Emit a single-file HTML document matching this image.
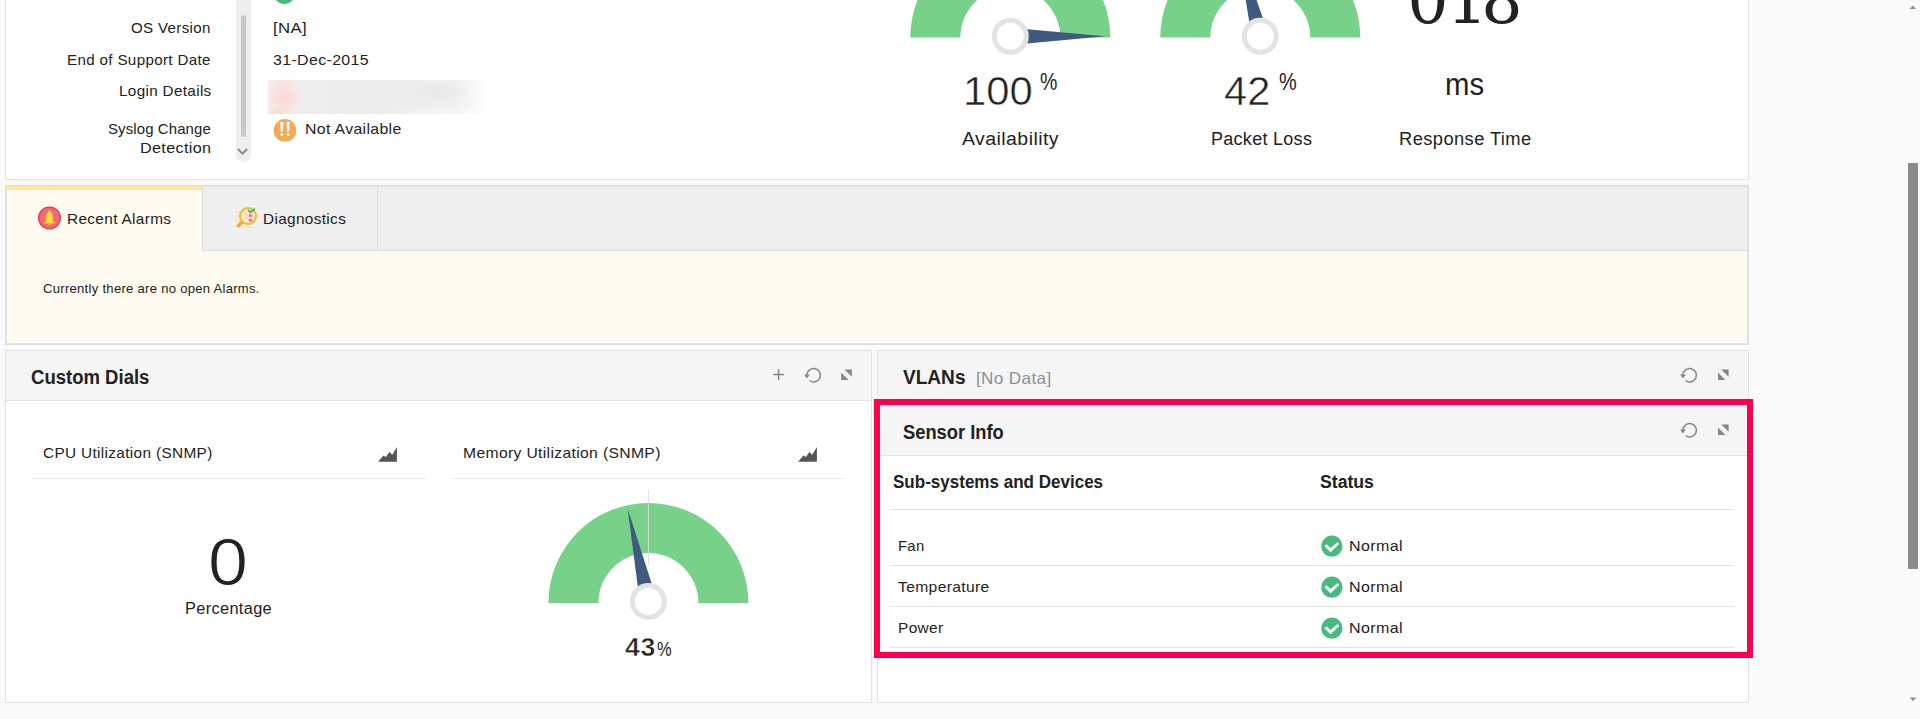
<!DOCTYPE html>
<html lang="en"><head><meta charset="utf-8"><title>Device Snapshot</title>
<style>
html,body{margin:0;padding:0}
body{width:1920px;height:719px;overflow:hidden;background:#fafafa;position:relative;font-family:'Liberation Sans',sans-serif}
.b{position:absolute;box-sizing:border-box}
.t{position:absolute;white-space:nowrap}
svg{position:absolute;left:0;top:0}
</style></head>
<body>

<!-- top panel -->
<div class="b" style="left:5px;top:-10px;width:1744px;height:190px;background:#fff;border:1px solid #e4e4e4"></div>
<!-- left details scroll track -->
<div class="b" style="left:236px;top:-20px;width:15px;height:182px;background:#eeeeee;border-radius:7.5px"></div>
<div class="b" style="left:241px;top:15px;width:5px;height:122px;background:#c8c8c8;border-radius:2.5px"></div>
<!-- blurred login -->
<div class="b" style="left:268px;top:80px;width:217px;height:34px;background:radial-gradient(ellipse 17px 22px at 16px 17px,#fdd5d5 0,rgba(253,213,213,0) 100%),radial-gradient(ellipse 16px 7px at 10px 34px,#fddcc6 0,rgba(253,220,198,0) 100%),radial-gradient(ellipse 70px 11px at 185px 34px,rgba(255,255,255,.5) 0,rgba(255,255,255,0) 100%),radial-gradient(ellipse 34px 9px at 170px 12px,#e8e8e8 0,rgba(232,232,232,0) 100%),linear-gradient(90deg,#f7ebeb 0px,#f1eded 30px,#eeeeee 50px,#ececec 75px,#ededed 150px,#eeeeee 185px,#f5f5f5 200px,#fefefe 217px)"></div>
<!-- tabs -->
<div class="b" style="left:5px;top:185px;width:1744px;height:160px;background:#fffbf0;border:1px solid #dedee2"></div>
<div class="b" style="left:6px;top:186px;width:1742px;height:158px;border:1px solid #e3e3e3"></div>
<div class="b" style="left:6px;top:186px;width:1742px;height:65px;background:#efefef;border:1px solid #e3e3e3;border-left:0;border-bottom:1px solid #dddde1"></div>
<div class="b" style="left:6px;top:186px;width:196px;height:65px;background:#fffbf0;border-top:4px solid #fee79b"></div>
<div class="b" style="left:6px;top:190px;width:1px;height:154px;background:#e0e0e0"></div>
<div class="b" style="left:202px;top:186px;width:1px;height:65px;background:#dddde1"></div>
<div class="b" style="left:377px;top:187px;width:1px;height:63px;background:#dddde1"></div>
<!-- custom dials panel -->
<div class="b" style="left:5px;top:350px;width:867px;height:353px;background:#fff;border:1px solid #e2e2e2"></div>
<div class="b" style="left:6px;top:351px;width:865px;height:50px;background:#f5f5f5;border-bottom:1px solid #e2e2e2"></div>
<div class="b" style="left:31px;top:478px;width:395px;height:1px;background:#ececec"></div>
<div class="b" style="left:451px;top:478px;width:394px;height:1px;background:#ececec"></div>
<!-- vlan panel -->
<div class="b" style="left:877px;top:350px;width:872px;height:353px;background:#fff;border:1px solid #e2e2e2"></div>
<div class="b" style="left:878px;top:351px;width:870px;height:50px;background:#f5f5f5;border-bottom:1px solid #e2e2e2"></div>
<div class="b" style="left:878px;top:405px;width:870px;height:51px;background:#f5f5f5;border-bottom:1px solid #e2e2e2"></div>
<div class="b" style="left:890px;top:509px;width:844px;height:1px;background:#e4e4e4"></div>
<div class="b" style="left:890px;top:565px;width:844px;height:1px;background:#e4e4e4"></div>
<div class="b" style="left:890px;top:606px;width:844px;height:1px;background:#e4e4e4"></div>
<div class="b" style="left:890px;top:647px;width:844px;height:1px;background:#e4e4e4"></div>
<!-- red highlight -->
<div class="b" style="left:874px;top:399px;width:879px;height:259px;border:6px solid #fc004d"></div>
<!-- page scrollbar -->
<div class="b" style="left:1908px;top:163px;width:10px;height:406px;background:#8b8b8b"></div>

<svg width="1920" height="719" viewBox="0 0 1920 719">
<path d="M910.3 37.5 A100 100 0 0 1 1110.3 37.5 L1060.3 37.5 A50 50 0 0 0 960.3 37.5 Z" fill="#77d188"/><path d="M1010.30 44.90 L1105.30 36.30 L1010.30 27.70 Z" fill="#3e5a80"/><circle cx="1010.3" cy="36.3" r="16" fill="#fff" stroke="#e3e3e3" stroke-width="5"/>
<path d="M1160.3 37.5 A100 100 0 0 1 1360.3 37.5 L1310.3 37.5 A50 50 0 0 0 1210.3 37.5 Z" fill="#77d188"/><path d="M1268.63 34.16 L1236.67 -55.72 L1251.97 38.44 Z" fill="#3e5a80"/><circle cx="1260.3" cy="36.3" r="16" fill="#fff" stroke="#e3e3e3" stroke-width="5"/>
<path d="M548.4 603 A100 100 0 0 1 748.4 603 L698.4 603 A50 50 0 0 0 598.4 603 Z" fill="#77d188"/><rect x="647.9" y="490" width="1" height="75" fill="#dcdcdc"/><path d="M656.79 599.62 L627.68 508.79 L640.01 603.38 Z" fill="#3e5a80"/><circle cx="648.4" cy="601.5" r="16" fill="#fff" stroke="#e3e3e3" stroke-width="5"/>
<path d="M773.2 374.6 H784.0 M778.6 369.20000000000005 V380.0" stroke="#83868a" stroke-width="1.5" fill="none"/>
<path d="M806.95 374.96 A6.75 6.75 0 1 1 809.54 380.52" fill="none" stroke="#83868a" stroke-width="1.5"/><path d="M804.05 374.60 L809.85 374.60 L806.95 378.40 Z" fill="#83868a"/>
<path d="M844.4000000000001 369.4 L851.8000000000001 369.4 L851.8000000000001 376.8 Z" fill="#83868a"/><path d="M841.2 372.59999999999997 L841.2 380.0 L848.6 380.0 Z" fill="#83868a"/>
<path d="M1682.95 374.96 A6.75 6.75 0 1 1 1685.54 380.52" fill="none" stroke="#83868a" stroke-width="1.5"/><path d="M1680.05 374.60 L1685.85 374.60 L1682.95 378.40 Z" fill="#83868a"/>
<path d="M1721.2 369.4 L1728.6 369.4 L1728.6 376.8 Z" fill="#83868a"/><path d="M1718.0 372.59999999999997 L1718.0 380.0 L1725.3999999999999 380.0 Z" fill="#83868a"/>
<path d="M1682.95 429.96 A6.75 6.75 0 1 1 1685.54 435.52" fill="none" stroke="#83868a" stroke-width="1.5"/><path d="M1680.05 429.60 L1685.85 429.60 L1682.95 433.40 Z" fill="#83868a"/>
<path d="M1721.2 424.4 L1728.6 424.4 L1728.6 431.8 Z" fill="#83868a"/><path d="M1718.0 427.59999999999997 L1718.0 435.0 L1725.3999999999999 435.0 Z" fill="#83868a"/>
<path d="M378.20 461.70 L383.35 455.60 L385.85 457.10 L389.40 452.10 L392.30 454.80 L396.90 447.10 L396.90 461.70 Z" fill="#555"/>
<path d="M798.20 461.70 L803.35 455.60 L805.85 457.10 L809.40 452.10 L812.30 454.80 L816.90 447.10 L816.90 461.70 Z" fill="#555"/>
<circle cx="1331.9" cy="546.2" r="10.6" fill="#47bb7e"/><path d="M1324.40 546.30 L1326.50 544.20 L1330.60 547.90 L1337.50 542.10 L1339.20 544.00 L1330.60 552.30 Z" fill="#fff"/>
<circle cx="1331.9" cy="587.2" r="10.6" fill="#47bb7e"/><path d="M1324.40 587.30 L1326.50 585.20 L1330.60 588.90 L1337.50 583.10 L1339.20 585.00 L1330.60 593.30 Z" fill="#fff"/>
<circle cx="1331.9" cy="628.2" r="10.6" fill="#47bb7e"/><path d="M1324.40 628.30 L1326.50 626.20 L1330.60 629.90 L1337.50 624.10 L1339.20 626.00 L1330.60 634.30 Z" fill="#fff"/>
<circle cx="284.4" cy="-6.4" r="10.6" fill="#47bb7e"/>
<circle cx="285" cy="130.4" r="11.3" fill="#f7a853"/><path d="M280.2 122.1 h3.2 l-0.5 9.4 h-2.2 Z M286.5 122.1 h3.2 l-0.5 9.4 h-2.2 Z" fill="#fff"/><rect x="280.5" y="133.3" width="2.6" height="2.6" fill="#fff"/><rect x="286.8" y="133.3" width="2.6" height="2.6" fill="#fff"/>
<path d="M237.9 149.0 L242.5 153.7 L247.1 149.0" stroke="#8a8a8a" stroke-width="1.8" fill="none"/>
<defs><linearGradient id="bellg" x1="0" x2="1" y1="0" y2="0"><stop offset="0" stop-color="#f6a01c"/><stop offset="0.5" stop-color="#ffe34d"/><stop offset="1" stop-color="#f6a01c"/></linearGradient></defs>
<circle cx="49.5" cy="217.9" r="10.9" fill="#ea6b79" stroke="#fb2740" stroke-width="1.1"/><circle cx="49.5" cy="211.4" r="1.1" fill="#f9c22e"/><path d="M45.7 220.6 C45.7 216 46.0 212.1 49.5 212.1 C53.0 212.1 53.3 216 53.3 220.6 L55.9 223.4 L43.1 223.4 Z" fill="url(#bellg)"/><circle cx="49.5" cy="224.1" r="1.3" fill="#f8b322"/>
<g opacity="0.55"><rect x="236" y="211.5" width="4.5" height="1.6" fill="#f9d3a6"/><rect x="235.5" y="215.5" width="4" height="1.6" fill="#f9d3a6"/><rect x="236" y="219.5" width="4" height="1.6" fill="#f9d3a6"/><rect x="243" y="226" width="9" height="1.6" fill="#f9d3a6"/></g><path d="M242.0 222.2 L238.2 225.9" stroke="#f7a11c" stroke-width="3.2" stroke-linecap="round"/><circle cx="248.1" cy="216.1" r="8" fill="#fce6cc" stroke="#e6c034" stroke-width="2"/><path d="M244.5 214.5 h3 M244.5 218 h3" stroke="#f7d0b0" stroke-width="1.3"/><rect x="248.8" y="214.3" width="3.4" height="2.6" fill="#f4707c"/><rect x="248.8" y="218.8" width="3.4" height="2.8" fill="#f4707c"/><path d="M248.6 210.6 l2 1.8 l3.6 -3.2" stroke="#3dbb7d" stroke-width="2" fill="none" stroke-linecap="round"/>
<path d="M1909.6 9 L1916 9 L1912.8 5.4 Z" fill="#8a8a8a"/>
<path d="M1909.6 697.4 L1916.2 697.4 L1912.9 701 Z" fill="#8a8a8a"/>
</svg>
<div class="t" id="t0" style="left:131.13px;top:19.01px;font-size:15px;line-height:18px;font-weight:400;color:#222;font-family:'Liberation Sans', sans-serif;letter-spacing:0.330px;transform:scaleX(1.0061);transform-origin:0 0;">OS Version</div>
<div class="t" id="t1" style="left:67.37px;top:51.01px;font-size:15px;line-height:18px;font-weight:400;color:#222;font-family:'Liberation Sans', sans-serif;letter-spacing:0.330px;transform:scaleX(1.0113);transform-origin:0 0;">End of Support Date</div>
<div class="t" id="t2" style="left:119.10px;top:82.01px;font-size:15px;line-height:18px;font-weight:400;color:#222;font-family:'Liberation Sans', sans-serif;letter-spacing:0.330px;transform:scaleX(1.0172);transform-origin:0 0;">Login Details</div>
<div class="t" id="t3" style="left:108.05px;top:120.00px;font-size:15px;line-height:18px;font-weight:400;color:#222;font-family:'Liberation Sans', sans-serif;letter-spacing:0.114px;transform:scaleX(0.9967);transform-origin:0 0;">Syslog Change</div>
<div class="t" id="t4" style="left:140.13px;top:139.02px;font-size:15px;line-height:18px;font-weight:400;color:#222;font-family:'Liberation Sans', sans-serif;letter-spacing:0.330px;transform:scaleX(1.0759);transform-origin:0 0;">Detection</div>
<div class="t" id="t5" style="left:273.06px;top:19.01px;font-size:15px;line-height:18px;font-weight:400;color:#222;font-family:'Liberation Sans', sans-serif;letter-spacing:0.330px;transform:scaleX(1.1193);transform-origin:0 0;">[NA]</div>
<div class="t" id="t6" style="left:273.31px;top:51.01px;font-size:15px;line-height:18px;font-weight:400;color:#222;font-family:'Liberation Sans', sans-serif;letter-spacing:0.330px;transform:scaleX(1.0627);transform-origin:0 0;">31-Dec-2015</div>
<div class="t" id="t7" style="left:305.25px;top:120.00px;font-size:15px;line-height:18px;font-weight:400;color:#222;font-family:'Liberation Sans', sans-serif;letter-spacing:0.330px;transform:scaleX(1.0542);transform-origin:0 0;">Not Available</div>
<div class="t" id="t8" style="left:963.30px;top:66.01px;font-size:41.5px;line-height:50px;font-weight:400;color:#222;font-family:'Liberation Sans', sans-serif;letter-spacing:0.000px;transform:scaleX(1.0066);transform-origin:0 0;-webkit-text-stroke:0.5px #fff;">100</div>
<div class="t" id="t9" style="left:1040.36px;top:68.01px;font-size:23px;line-height:28px;font-weight:400;color:#222;font-family:'Liberation Sans', sans-serif;letter-spacing:0.000px;transform:scaleX(0.8480);transform-origin:0 0;">%</div>
<div class="t" id="t10" style="left:1224.48px;top:66.01px;font-size:41.5px;line-height:50px;font-weight:400;color:#222;font-family:'Liberation Sans', sans-serif;letter-spacing:0.000px;transform:scaleX(1.0021);transform-origin:0 0;-webkit-text-stroke:0.5px #fff;">42</div>
<div class="t" id="t11" style="left:1278.51px;top:68.01px;font-size:23px;line-height:28px;font-weight:400;color:#222;font-family:'Liberation Sans', sans-serif;letter-spacing:0.000px;transform:scaleX(0.8665);transform-origin:0 0;">%</div>
<div class="t" id="t12" style="left:1407.21px;top:-38.01px;font-size:65px;line-height:78px;font-weight:400;color:#222;font-family:'DejaVu Serif', serif;letter-spacing:-4.384px;">0<span style='position:relative;left:2.2px'>1</span>8</div>
<div class="t" id="t13" style="left:1444.69px;top:65.00px;font-size:32px;line-height:38px;font-weight:400;color:#222;font-family:'Liberation Sans', sans-serif;letter-spacing:0.000px;transform:scaleX(0.9158);transform-origin:0 0;">ms</div>
<div class="t" id="t14" style="left:961.85px;top:128.00px;font-size:18px;line-height:22px;font-weight:400;color:#222;font-family:'Liberation Sans', sans-serif;letter-spacing:0.396px;transform:scaleX(1.0840);transform-origin:0 0;">Availability</div>
<div class="t" id="t15" style="left:1210.65px;top:128.00px;font-size:18px;line-height:22px;font-weight:400;color:#222;font-family:'Liberation Sans', sans-serif;letter-spacing:0.295px;transform:scaleX(0.9989);transform-origin:0 0;">Packet Loss</div>
<div class="t" id="t16" style="left:1399.31px;top:128.00px;font-size:18px;line-height:22px;font-weight:400;color:#222;font-family:'Liberation Sans', sans-serif;letter-spacing:0.396px;transform:scaleX(1.0182);transform-origin:0 0;">Response Time</div>
<div class="t" id="t17" style="left:66.60px;top:210.01px;font-size:15px;line-height:18px;font-weight:400;color:#222;font-family:'Liberation Sans', sans-serif;letter-spacing:0.330px;transform:scaleX(1.0248);transform-origin:0 0;">Recent Alarms</div>
<div class="t" id="t18" style="left:262.80px;top:210.01px;font-size:15px;line-height:18px;font-weight:400;color:#222;font-family:'Liberation Sans', sans-serif;letter-spacing:0.330px;transform:scaleX(1.0247);transform-origin:0 0;">Diagnostics</div>
<div class="t" id="t19" style="left:42.59px;top:281.00px;font-size:13px;line-height:16px;font-weight:400;color:#222;font-family:'Liberation Sans', sans-serif;letter-spacing:0.286px;transform:scaleX(1.0036);transform-origin:0 0;">Currently there are no open Alarms.</div>
<div class="t" id="t20" style="left:30.66px;top:365.01px;font-size:20px;line-height:24px;font-weight:700;color:#222;font-family:'Liberation Sans', sans-serif;letter-spacing:0.000px;transform:scaleX(0.9264);transform-origin:0 0;">Custom Dials</div>
<div class="t" id="t21" style="left:43.35px;top:444.00px;font-size:15px;line-height:18px;font-weight:400;color:#222;font-family:'Liberation Sans', sans-serif;letter-spacing:0.330px;transform:scaleX(1.0242);transform-origin:0 0;">CPU Utilization (SNMP)</div>
<div class="t" id="t22" style="left:462.78px;top:444.00px;font-size:15px;line-height:18px;font-weight:400;color:#222;font-family:'Liberation Sans', sans-serif;letter-spacing:0.330px;transform:scaleX(1.0455);transform-origin:0 0;">Memory Utilization (SNMP)</div>
<div class="t" id="t23" style="left:208.27px;top:523.00px;font-size:66px;line-height:79px;font-weight:400;color:#222;font-family:'Liberation Sans', sans-serif;letter-spacing:0.000px;transform:scaleX(1.0892);transform-origin:0 0;-webkit-text-stroke:0.9px #fff;">0</div>
<div class="t" id="t24" style="left:185.10px;top:599.01px;font-size:16px;line-height:19px;font-weight:400;color:#222;font-family:'Liberation Sans', sans-serif;letter-spacing:0.352px;transform:scaleX(1.0191);transform-origin:0 0;">Percentage</div>
<div class="t" id="t25" style="left:624.64px;top:632.01px;font-size:25px;line-height:30px;font-weight:700;color:#222;font-family:'Liberation Sans', sans-serif;letter-spacing:0.550px;transform:scaleX(1.0683);transform-origin:0 0;-webkit-text-stroke:0.5px #fff;">43</div>
<div class="t" id="t26" style="left:656.80px;top:638.01px;font-size:19.5px;line-height:23px;font-weight:400;color:#222;font-family:'Liberation Sans', sans-serif;letter-spacing:0.000px;transform:scaleX(0.8447);transform-origin:0 0;">%</div>
<div class="t" id="t27" style="left:902.89px;top:365.01px;font-size:20px;line-height:24px;font-weight:700;color:#222;font-family:'Liberation Sans', sans-serif;letter-spacing:0.000px;transform:scaleX(0.9530);transform-origin:0 0;">VLANs</div>
<div class="t" id="t28" style="left:975.62px;top:368.00px;font-size:16.5px;line-height:20px;font-weight:400;color:#8a8f9b;font-family:'Liberation Sans', sans-serif;letter-spacing:0.363px;transform:scaleX(1.0351);transform-origin:0 0;">[No Data]</div>
<div class="t" id="t29" style="left:902.61px;top:420.00px;font-size:20px;line-height:24px;font-weight:700;color:#222;font-family:'Liberation Sans', sans-serif;letter-spacing:0.000px;transform:scaleX(0.9151);transform-origin:0 0;">Sensor Info</div>
<div class="t" id="t30" style="left:892.76px;top:471.01px;font-size:18px;line-height:22px;font-weight:700;color:#222;font-family:'Liberation Sans', sans-serif;letter-spacing:0.000px;transform:scaleX(0.9458);transform-origin:0 0;">Sub-systems and Devices</div>
<div class="t" id="t31" style="left:1320.09px;top:471.01px;font-size:18px;line-height:22px;font-weight:700;color:#222;font-family:'Liberation Sans', sans-serif;letter-spacing:0.000px;transform:scaleX(0.9803);transform-origin:0 0;">Status</div>
<div class="t" id="t32" style="left:897.60px;top:537.00px;font-size:15px;line-height:18px;font-weight:400;color:#222;font-family:'Liberation Sans', sans-serif;letter-spacing:0.325px;transform:scaleX(0.9880);transform-origin:0 0;">Fan</div>
<div class="t" id="t33" style="left:898.02px;top:578.01px;font-size:15px;line-height:18px;font-weight:400;color:#222;font-family:'Liberation Sans', sans-serif;letter-spacing:0.330px;transform:scaleX(1.0437);transform-origin:0 0;">Temperature</div>
<div class="t" id="t34" style="left:898.07px;top:619.01px;font-size:15px;line-height:18px;font-weight:400;color:#222;font-family:'Liberation Sans', sans-serif;letter-spacing:0.330px;transform:scaleX(1.0313);transform-origin:0 0;">Power</div>
<div class="t" id="t35" style="left:1348.93px;top:537.00px;font-size:15px;line-height:18px;font-weight:400;color:#222;font-family:'Liberation Sans', sans-serif;letter-spacing:0.330px;transform:scaleX(1.0697);transform-origin:0 0;">Normal</div>
<div class="t" id="t36" style="left:1348.93px;top:578.01px;font-size:15px;line-height:18px;font-weight:400;color:#222;font-family:'Liberation Sans', sans-serif;letter-spacing:0.330px;transform:scaleX(1.0697);transform-origin:0 0;">Normal</div>
<div class="t" id="t37" style="left:1348.93px;top:619.01px;font-size:15px;line-height:18px;font-weight:400;color:#222;font-family:'Liberation Sans', sans-serif;letter-spacing:0.330px;transform:scaleX(1.0697);transform-origin:0 0;">Normal</div>
</body></html>
